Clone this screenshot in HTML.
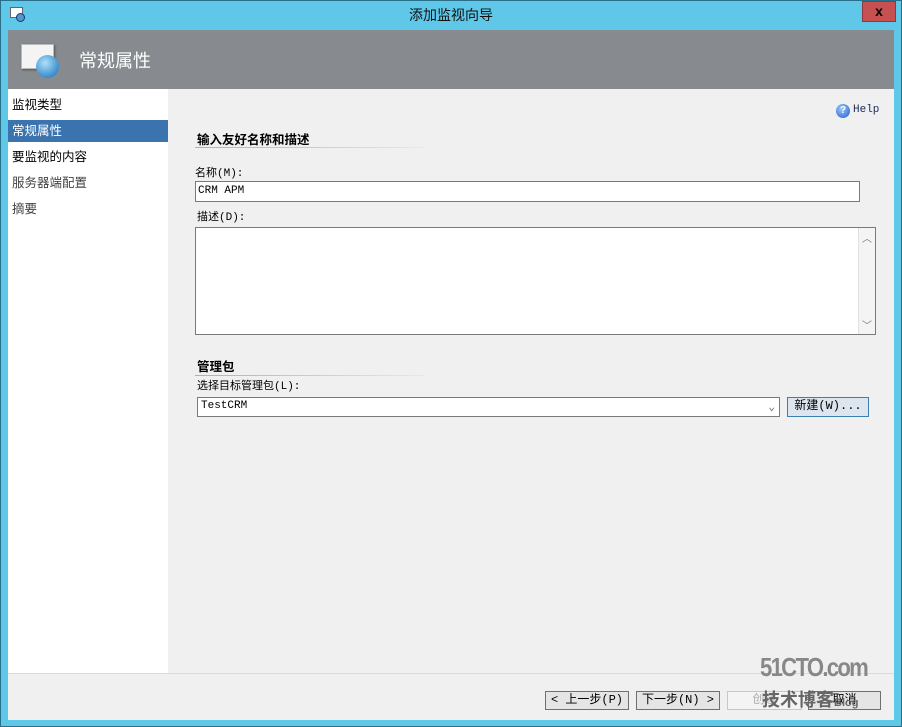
<!DOCTYPE html>
<html><head><meta charset="utf-8"><style>
*{margin:0;padding:0;box-sizing:border-box}
body{width:902px;height:727px;background:#5fc8e8;position:relative;overflow:hidden;font-family:"Liberation Sans","Noto Sans CJK SC",sans-serif;font-size:12px;color:#000}
.a{position:absolute}
.mono{font-family:"Liberation Mono","Noto Sans CJK SC",monospace;font-size:11px}
.nav div{height:22px;line-height:22px;padding-left:4px;font-size:12.5px;margin-bottom:4px}
.btn{position:absolute;height:19px;border:1px solid #707070;background:#e5e5e5;font-size:12px;line-height:17px;text-align:center}
</style></head><body>
<div class="a" style="left:0;top:0;width:902px;height:727px;border:1px solid #2a6f8a"></div>
<div class="a" style="left:10px;top:7px;width:13px;height:11px;border:1px solid #666;background:#fff"></div>
<div class="a" style="left:16px;top:13px;width:9px;height:9px;border-radius:50%;background:#4a9ad6;border:1px solid #236"></div>
<div class="a" style="left:0;top:5px;width:902px;text-align:center;font-size:14px;color:#111">添加监视向导</div>
<div class="a" style="left:862px;top:1px;width:34px;height:21px;background:#c75050;border:1px solid #8a3a3a;color:#000;font-weight:bold;font-size:14px;text-align:center;line-height:19px">x</div>
<div class="a" style="left:8px;top:30px;width:886px;height:59px;background:#878a8e"></div>
<div class="a" style="left:21px;top:44px;width:33px;height:25px;background:#f4f4f4;border:1px solid #bbb;box-shadow:1px 1px 2px #555"></div>
<div class="a" style="left:36px;top:55px;width:23px;height:23px;border-radius:50%;background:radial-gradient(circle at 40% 35%,#aee0f7,#3b8ed0 70%,#2a6ea8)"></div>
<div class="a" style="left:79px;top:47px;font-size:18px;color:#fff">常规属性</div>
<div class="a nav" style="left:8px;top:89px;width:160px;height:584px;background:#fff;padding-top:5px">
<div>监视类型</div>
<div style="background:#3b73af;color:#fff">常规属性</div>
<div>要监视的内容</div>
<div style="color:#444">服务器端配置</div>
<div style="color:#444">摘要</div>
</div>
<div class="a" style="left:168px;top:89px;width:726px;height:584px;background:#f0f0f0"></div>
<div class="a" style="left:8px;top:673px;width:886px;height:47px;background:#f0f0f0;border-top:1px solid #dcdcdc"></div>
<div class="a" style="left:836px;top:104px;width:14px;height:14px;border-radius:50%;background:radial-gradient(circle at 40% 35%,#9cc8ff,#1d5cc6);color:#fff;font-size:10px;font-weight:bold;text-align:center;line-height:14px">?</div>
<div class="a mono" style="left:853px;top:104px;color:#1a2a5a">Help</div>
<div class="a" style="left:197px;top:129px;font-weight:bold;font-size:12.5px">输入友好名称和描述</div>
<div class="a" style="left:195px;top:147px;width:230px;height:1px;background:linear-gradient(90deg,#b0b0b0,#e8e8e8)"></div>
<div class="a mono" style="left:195px;top:164px">名称(M):</div>
<div class="a mono" style="left:195px;top:181px;width:665px;height:21px;background:#fff;border:1px solid #7a7a7a;padding:3px 2px">CRM APM</div>
<div class="a mono" style="left:197px;top:208px">描述(D):</div>
<div class="a" style="left:195px;top:227px;width:681px;height:108px;background:#fff;border:1px solid #7a7a7a"></div>
<div class="a" style="left:858px;top:228px;width:17px;height:106px;background:#f4f4f4;border-left:1px solid #e0e0e0;color:#777;font-size:10px;text-align:center"><div style="margin-top:2px">︿</div><div style="margin-top:72px">﹀</div></div>
<div class="a" style="left:197px;top:356px;font-weight:bold;font-size:12.5px">管理包</div>
<div class="a" style="left:195px;top:375px;width:230px;height:1px;background:linear-gradient(90deg,#b0b0b0,#e8e8e8)"></div>
<div class="a mono" style="left:197px;top:377px">选择目标管理包(L):</div>
<div class="a mono" style="left:197px;top:397px;width:583px;height:20px;background:#fff;border:1px solid #7a7a7a;padding:2px 3px">TestCRM<span style="position:absolute;right:4px;top:2px;color:#666">⌄</span></div>
<div class="btn mono" style="left:787px;top:397px;width:82px;height:20px;border-color:#3c7fb1;background:#dde6ee">新建(W)...</div>
<div class="btn mono" style="left:545px;top:691px;width:84px">&lt; 上一步(P)</div>
<div class="btn mono" style="left:636px;top:691px;width:84px">下一步(N) &gt;</div>
<div class="btn mono" style="left:727px;top:691px;width:75px;color:#aaa;border-color:#c8c8c8;background:#f4f4f4">创建</div>
<div class="btn mono" style="left:808px;top:691px;width:73px">取消</div>
<div class="a" style="left:760px;top:652px;font-size:26px;font-weight:bold;color:#888;letter-spacing:-2px;transform:scaleX(0.85);transform-origin:left">51CTO.com</div>
<div class="a" style="left:762px;top:686px;font-size:18px;font-weight:bold;color:#666">技术博客<span style="font-size:11px">Blog</span></div>
</body></html>
